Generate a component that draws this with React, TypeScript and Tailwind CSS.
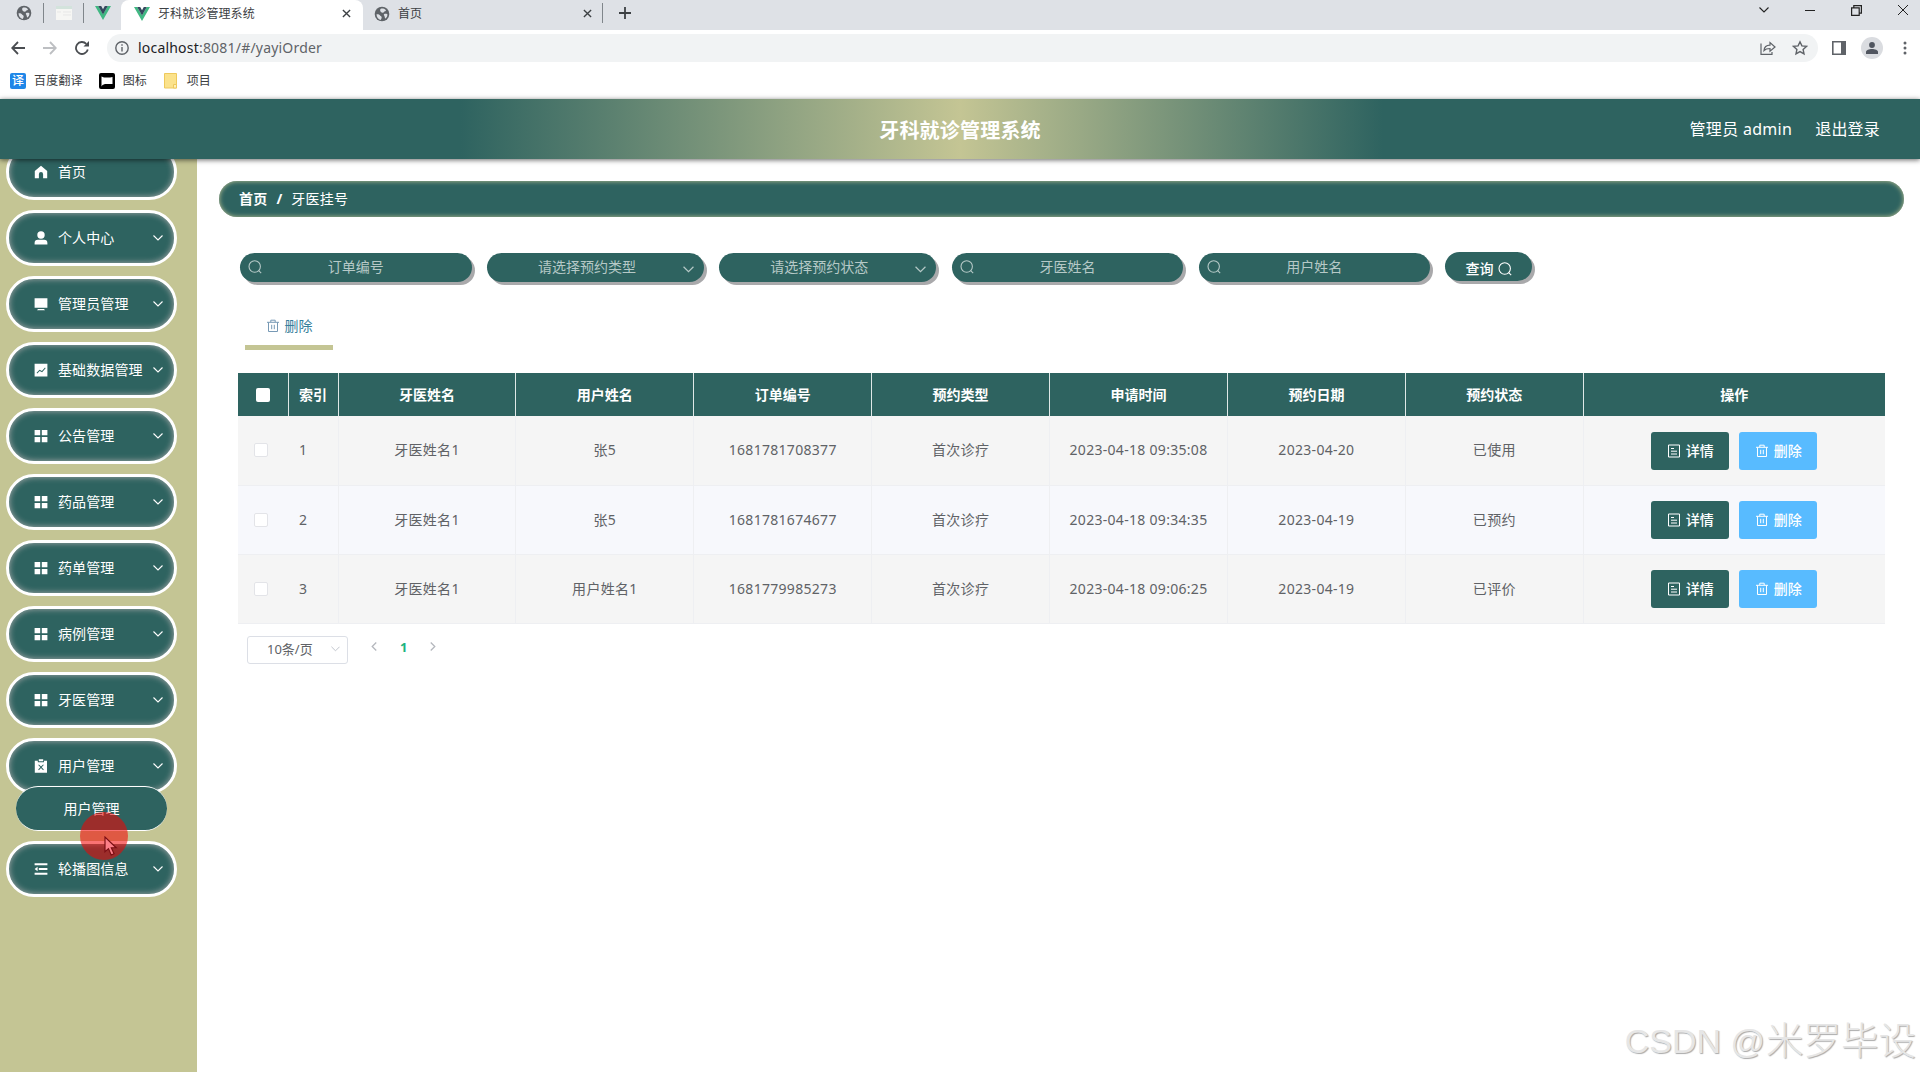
import type { ReactNode } from 'react';

type IconProps = { className?: string };

const GlobeIcon = ({ className = '' }: IconProps) => (
  <svg viewBox="0 0 16 16" className={className}>
    <circle cx="8" cy="8" r="7.3" fill="#5f6368" />
    <path d="M2.5 8.2c1.6-.2 3 .3 3.6 1.4.5 1 1.600.7 1.600 1.700 0 .9-.3 1.600-1 2.600C4.300 13.200 2.500 11 2.500 8.200zM6.800 2.700c1.700-.4 3.700.1 4.900 1.300.7.8-.3 1.400-1.200 1.400-.8.100-.6 1.200-1.500 1.300-1 .1-1.600-.400-2.300-1C6 5.100 5.900 3 6.800 2.700zM10 8.300c1-.7 2.200-.5 3.400-.1.100 1.800-.6 3.200-1.800 4.200-.9-.2-.700-1.200-1-2-.200-.600-1.200-1.400-.600-2.100z" fill="#dee1e6" />
  </svg>
);

const VueIcon = ({ className = '' }: IconProps) => (
  <svg viewBox="0 0 16 14" className={className}>
    <path d="M0 0h3.200L8 8.300 12.800 0H16L8 14z" fill="#41b883" />
    <path d="M3.200 0h3L8 3.200 9.800 0h3L8 8.400z" fill="#35495e" />
  </svg>
);

const CloseIcon = ({ className = '' }: IconProps) => (
  <svg viewBox="0 0 10 10" className={className} fill="none" stroke="currentColor" strokeWidth="1.5">
    <path d="M1 1l8 8M9 1L1 9" />
  </svg>
);

const ChevronDown = ({ className = '' }: IconProps) => (
  <svg viewBox="0 0 10 6" className={className} fill="none" stroke="currentColor" strokeWidth="1.100">
    <path d="M.5.5L5 5 9.500.5" />
  </svg>
);

const SearchIcon = ({ className = '' }: IconProps) => (
  <svg viewBox="0 0 14 14" className={className} fill="none" stroke="currentColor" strokeWidth="1.100">
    <circle cx="6.700" cy="6.500" r="5.700" />
    <path d="M10.700 10.600l2.500 2.500" />
  </svg>
);

const TrashIcon = ({ className = '' }: IconProps) => (
  <svg viewBox="0 0 14 14" className={className} fill="none" stroke="currentColor" strokeWidth="1">
    <path d="M1 3.300h12M2.500 3.300v9.200h9V3.300M4.800 3V1.200h4.400V3M5.700 5.800v4.400M8.300 5.800v4.400" />
  </svg>
);

const DocIcon = ({ className = '' }: IconProps) => (
  <svg viewBox="0 0 14 14" className={className} fill="none" stroke="currentColor" strokeWidth="1">
    <path d="M1.500 1h11v12h-11zM4 4.500h3M4 7.200h6M4 10h6" />
  </svg>
);

// Iconos rellenos del menú lateral
const menuIcons: Record<string, ReactNode> = {
  home: <path d="M7 .8L.8 6v7.300h4.100V9.200a2.100 2.100 0 014.200 0v4.100h4.100V6z" />,
  user: <path d="M7 .3a3.700 3.700 0 110 7.400A3.700 3.700 0 017 .3zM.600 13.600v-1.700c0-2 1.200-3.200 3.200-3.200h6.400c2 0 3.200 1.200 3.200 3.200v1.700z" />,
  monitor: <path d="M.6 1.200h12.800v9.600H.6zM4 12h6l1 1.300H3z" />,
  data: <path fillRule="evenodd" d="M.6.8h12.800v12.600H.6zM2.600 9.800l.6.600 2.500-2.500 2.400 1.300 3.500-4-.6-.600-3.100 3.500-2.300-1.300z" />,
  grid: <path d="M.6.9h5.600v5.300H.6zM7.800.9h5.600v5.300H7.800zM.6 7.900h5.600v5.300H.6zM7.800 7.900h5.600v5.300H7.800z" />,
  order: <path fillRule="evenodd" d="M.8 1.800h3v1.400h6.200V1.800h3v12H.8zM4.800.3h4.400v1.900H4.800zM4.200 6l2.100 2.300-2.100 2.300.7.600L7 8.900l2.100 2.300.7-.600-2.100-2.300L9.800 6l-.7-.6L7 7.600 4.900 5.400z" />,
  fold: <path d="M.6 1.300h12.800v1.900H.6zM4.800 6h8.600v1.900H4.800zM.6 10.800h12.800v1.900H.6zM.6 7l3-2.200v4.400z" />,
};

const menu = [
  { icon: 'home', label: '首页', leaf: true },
  { icon: 'user', label: '个人中心' },
  { icon: 'monitor', label: '管理员管理' },
  { icon: 'data', label: '基础数据管理' },
  { icon: 'grid', label: '公告管理' },
  { icon: 'grid', label: '药品管理' },
  { icon: 'grid', label: '药单管理' },
  { icon: 'grid', label: '病例管理' },
  { icon: 'grid', label: '牙医管理' },
  { icon: 'order', label: '用户管理', child: '用户管理' },
  { icon: 'fold', label: '轮播图信息' },
];

const columns = ['牙医姓名', '用户姓名', '订单编号', '预约类型', '申请时间', '预约日期', '预约状态'];

const orders = [
  ['牙医姓名1', '张5', '1681781708377', '首次诊疗', '2023-04-18 09:35:08', '2023-04-20', '已使用'],
  ['牙医姓名1', '张5', '1681781674677', '首次诊疗', '2023-04-18 09:34:35', '2023-04-19', '已预约'],
  ['牙医姓名1', '用户姓名1', '1681779985273', '首次诊疗', '2023-04-18 09:06:25', '2023-04-19', '已评价'],
];

function BrowserChrome() {
  return (
    <div className="h-[99px] shrink-0 bg-white text-xs text-[#3c4043]">
      <div className="flex h-[30px] bg-[#dee1e6]">
        <div className="flex w-[121px] items-center pb-1 pl-4">
          <GlobeIcon className="h-4 w-4" />
          <span className="ml-[11px] h-5 w-px bg-[#80868b]" />
          <svg viewBox="0 0 16 14" className="ml-3 h-3.5 w-4">
            <path d="M0 0h16v14H0z" fill="#f6f6f4" />
            <path d="M0 0h16v3H0z" fill="#d3e3dc" />
            <path d="M1 6h4M7 6h8M7 9h8" stroke="#e7e7e7" />
          </svg>
          <span className="ml-[11px] h-5 w-px bg-[#80868b]" />
          <VueIcon className="ml-[11px] h-3.5 w-4" />
        </div>
        <div className="flex w-[242px] items-center rounded-t-lg bg-white pr-3 pb-[3px] pl-[13px]">
          <VueIcon className="h-3.5 w-4" />
          <span className="ml-2 flex-1 pt-px tracking-[0.1px]">牙科就诊管理系统</span>
          <CloseIcon className="h-[9px] w-[9px]" />
        </div>
        <div className="flex w-[239px] items-center pr-[10px] pb-[3px] pl-[11px]">
          <GlobeIcon className="h-4 w-4" />
          <span className="ml-2 flex-1 pt-px">首页</span>
          <CloseIcon className="h-[9px] w-[9px]" />
        </div>
        <div className="flex flex-1 items-center pb-1">
          <span className="h-5 w-px bg-[#80868b]" />
          <svg viewBox="0 0 12 12" className="ml-[16px] h-3 w-3" stroke="#3c4043" strokeWidth="1.800">
            <path d="M6 0v12M0 6h12" />
          </svg>
        </div>
        <div className="flex items-center gap-9 pr-3 pb-[10px] text-[#222]">
          <ChevronDown className="h-[6px] w-[10px]" />
          <svg viewBox="0 0 10 10" className="h-[10px] w-[10px]" stroke="currentColor"><path d="M0 5.500h10" /></svg>
          <svg viewBox="0 0 11 11" className="h-[11px] w-[11px]" fill="none" stroke="currentColor" strokeWidth="1.200">
            <path d="M.6 2.800h7.600v7.600H.6zM2.800 2.600V.6h7.600v7.600H8.400" />
          </svg>
          <svg viewBox="0 0 10 10" className="h-[10px] w-[10px]" stroke="currentColor"><path d="M0 0l10 10M10 0L0 10" /></svg>
        </div>
      </div>

      <div className="flex h-[36px] items-center pr-3 pl-[11px] text-[#5f6368]">
        <svg viewBox="0 0 14 14" className="h-3.5 w-3.5" fill="none" stroke="#4a4d51" strokeWidth="1.800"><path d="M14 7H1.500M7 1L1.200 7 7 13" /></svg>
        <svg viewBox="0 0 14 14" className="ml-[18px] h-3.5 w-3.5" fill="none" stroke="#bdbfc2" strokeWidth="1.800"><path d="M0 7h12.500M7 1l5.800 6L7 13" /></svg>
        <svg viewBox="0 0 14 14" className="ml-[18px] h-3.5 w-3.5" fill="none" stroke="#4a4d51" strokeWidth="1.800">
          <path d="M12.800 8.500A6 6 0 1111.300 2.800" />
          <path d="M14 0v5.500H8.500z" fill="#4a4d51" stroke="none" />
        </svg>
        <div className="ml-[18px] flex h-7 w-[1711px] items-center rounded-full bg-[#f1f3f4] pr-[10px] pl-2">
          <svg viewBox="0 0 14 14" className="h-3.5 w-3.5" fill="none" stroke="currentColor" strokeWidth="1.400">
            <circle cx="7" cy="7" r="6.200" /><path d="M7 6v4.500M7 3.200v1.500" />
          </svg>
          <span className="ml-[9px] flex-1 text-[14px] tracking-[0.2px]"><span className="text-[#202124]">localhost</span>:8081/#/yayiOrder</span>
          <svg viewBox="0 0 16 14" className="mr-[16px] h-3.5 w-4" fill="none" stroke="currentColor" strokeWidth="1.200">
            <path d="M1 2.500v10.800h11V11M4 9.500c.3-3.500 2.300-5.200 6-5.300V1.500L15 6l-5 4.200V7.500C7.300 7.500 5.300 8 4 9.500z" />
          </svg>
          <svg viewBox="0 0 16 16" className="h-4 w-4" fill="none" stroke="currentColor" strokeWidth="1.400">
            <path d="M8 1.800l1.900 4.100 4.500.5-3.300 3 .9 4.500L8 11.600l-4 2.300.9-4.500-3.300-3 4.500-.5z" />
          </svg>
        </div>
        <svg viewBox="0 0 14 14" className="ml-[14px] h-3.5 w-3.5" fill="none" stroke="currentColor" strokeWidth="1.600">
          <path d="M.8.8h12.400v12.400H.8z" /><path d="M9 1h4v12H9z" fill="currentColor" stroke="none" />
        </svg>
        <span className="ml-[15px] flex h-[22px] w-[22px] items-center justify-center rounded-full bg-[#dadce0]">
          <svg viewBox="0 0 12 12" className="h-3 w-3" fill="#50555f"><circle cx="6" cy="3" r="2.900" /><path d="M0 12v-2c0-2 3-3 6-3s6 1 6 3v2z" /></svg>
        </span>
        <svg viewBox="0 0 4 14" className="ml-[20px] h-3.5 w-1" fill="currentColor">
          <circle cx="2" cy="2" r="1.500" /><circle cx="2" cy="7" r="1.500" /><circle cx="2" cy="12" r="1.500" />
        </svg>
      </div>

      <div className="flex h-[29px] items-center pl-2.5">
        <span className="flex h-4 w-4 items-center justify-center rounded-xs bg-[#1f87e8] text-[12px] leading-none font-medium text-white">译</span>
        <span className="ml-2 tracking-[0.2px]">百度翻译</span>
        <svg viewBox="0 0 16 16" className="ml-4 h-4 w-4">
          <rect width="16" height="16" rx="2" />
          <path d="M2.500 13.500V3.500L5 4.500h6l2.500-.5v7H6L3.500 12z" fill="#fff" />
        </svg>
        <span className="ml-2">图标</span>
        <svg viewBox="0 0 13 16" className="ml-[17px] h-4 w-[13px]">
          <path d="M.5.500h12v14.500H.5z" fill="#fbe28b" stroke="#eec95c" />
          <path d="M9.500 11.500h3v3.500h-3z" fill="#fff0b8" stroke="#eec95c" />
        </svg>
        <span className="ml-[10px]">项目</span>
      </div>
    </div>
  );
}

function Sidebar() {
  return (
    <aside className="w-[197px] shrink-0 overflow-hidden bg-[#c4c594] pl-1.5">
      <ul className="-mt-[15px] w-[171px] text-sm text-white">
        {menu.map((item) => (
          <li key={item.label} className="mb-2.5">
            <div className="flex h-14 items-center rounded-[30px] border-[3px] border-white bg-[#2e6360] pr-[11px] pl-[25px] shadow-[inset_0_0_6px_0_#aaa]">
              <svg viewBox="0 0 14 14" className="mr-[10px] h-3.5 w-3.5 shrink-0" fill="#fff">{menuIcons[item.icon]}</svg>
              <span className="flex-1 tracking-[0.1px] whitespace-nowrap">{item.label}</span>
              {!item.leaf && <ChevronDown className="h-[6px] w-[10px] shrink-0" />}
            </div>
            {item.child && (
              <div className="relative mx-auto -mt-2 flex h-[45px] w-[151px] items-center justify-center rounded-[22px] border-y border-white bg-[#2e6360]">
                {item.child}
                {/* marca del puntero */}
                <span className="absolute top-[25px] left-[64px] h-12 w-12 rounded-full bg-[#f50000]/55" />
                <svg viewBox="0 0 13 19" className="absolute top-[49px] left-[88px] h-[20px] w-[14px]">
                  <path d="M.8 1v14l3.300-3 2.600 6 2.700-1.200-2.600-5.600h4.600z" fill="#fc7f88" stroke="#7a0d12" strokeWidth="1.100" />
                </svg>
              </div>
            )}
          </li>
        ))}
      </ul>
    </aside>
  );
}

const FilterInput = ({ label }: { label: string }) => (
  <div className="flex h-[29px] w-[231.500px] items-center rounded-full bg-[#2e6360] px-2 pb-px text-[#b6c9c7] shadow-[3px_3px_0_#a9a9ab]">
    <SearchIcon className="h-3.5 w-3.5" />
    <span className="flex-1 pr-3.5 text-center">{label}</span>
  </div>
);

const FilterSelect = ({ label }: { label: string }) => (
  <div className="flex h-[29px] w-[217px] items-center rounded-full bg-[#2e6360] pr-[10px] pb-px pl-1 text-[#b6c9c7] shadow-[3px_3px_0_#a9a9ab]">
    <span className="flex-1 text-center">{label}</span>
    <ChevronDown className="mt-1 h-[7px] w-[11px]" />
  </div>
);

function OrderTable() {
  return (
    <table className="w-[1647px] table-fixed border-collapse text-sm">
      <colgroup>
        <col className="w-[50px]" />
        <col className="w-[50px]" />
        {columns.map((c) => <col key={c} className="w-[177.900px]" />)}
        <col />
      </colgroup>
      <thead>
        <tr className="h-[43px] bg-[#2e6360] font-bold text-white">
          <th className="border-r border-[#dfe8e7]"><span className="mx-auto block h-3.5 w-3.5 rounded-xs bg-white" /></th>
          <th className="border-r border-[#dfe8e7]">索引</th>
          {columns.map((c) => <th key={c} className="border-r border-[#dfe8e7]">{c}</th>)}
          <th>操作</th>
        </tr>
      </thead>
      <tbody className="text-[#606266]">
        {orders.map((row, i) => (
          <tr key={row[2]} className="h-[69px] border-b border-[#eeeff2] bg-[#f5f5f5] even:bg-[#f7f8fc]">
            <td><span className="ml-4 block h-3.5 w-3.5 rounded-xs border border-[#e3e4e8] bg-white" /></td>
            <td className="border-r border-[#eeeff2] pl-[11px]">{i + 1}</td>
            {row.map((cell, j) => (
              <td key={j} className="border-r border-[#eeeff2] text-center tracking-[0.3px] whitespace-nowrap">{cell}</td>
            ))}
            <td>
              <div className="flex justify-center gap-2.5 pt-px font-medium text-white">
                <button className="flex h-[38px] w-[78px] items-center justify-center gap-[5px] rounded-[3px] bg-[#2e6360]">
                  <DocIcon className="h-3.5 w-3.5" />详情
                </button>
                <button className="flex h-[38px] w-[78px] items-center justify-center gap-[5px] rounded-[3px] bg-[#58bbff]">
                  <TrashIcon className="h-3.5 w-3.5" />删除
                </button>
              </div>
            </td>
          </tr>
        ))}
      </tbody>
    </table>
  );
}

export default function App() {
  return (
    <div className="relative flex h-[1072px] w-[1920px] flex-col overflow-hidden bg-white font-['Noto_Sans','Noto_Sans_CJK_SC',sans-serif]">
      <BrowserChrome />

      <header className="relative z-10 flex h-[60px] shrink-0 items-center bg-[linear-gradient(90deg,#2e6360_24%,#c4c594_50%,#2e6360_72%)] px-10 text-base text-white shadow-[0_1px_5px_rgba(0,0,0,0.6)]">
        <div className="flex-1" />
        <h1 className="pt-[3px] text-xl font-bold tracking-[0.2px]">牙科就诊管理系统</h1>
        <div className="flex flex-1 justify-end gap-[23px]">
          <span className="tracking-[0.3px]">管理员 admin</span>
          <span className="tracking-[0.2px]">退出登录</span>
        </div>
      </header>

      <div className="flex min-h-0 flex-1">
        <Sidebar />
        <main className="flex-1 pt-[22px] pr-4 pl-[22px] text-sm">
          <div className="flex h-9 items-center gap-[9px] rounded-full bg-[#2e6360] pl-5 text-white shadow-[inset_0_0_5px_0_#c4c594]">
            <span className="font-bold tracking-[0.2px]">首页</span>
            <span className="font-bold">/</span>
            <span className="tracking-[0.3px]">牙医挂号</span>
          </div>

          <div className="mt-9 flex gap-[15.400px] pl-[21px]">
            <FilterInput label="订单编号" />
            <FilterSelect label="请选择预约类型" />
            <FilterSelect label="请选择预约状态" />
            <FilterInput label="牙医姓名" />
            <FilterInput label="用户姓名" />
            <button className="-mt-px flex h-[29px] w-[87px] items-center justify-center gap-[5px] rounded-full bg-[#2e6360] pt-1 font-medium text-white shadow-[3px_3px_0_#a9a9ab]">
              查询<SearchIcon className="h-3.5 w-3.5" />
            </button>
          </div>

          <div className="mt-[22px] ml-[26px] flex h-[46px] w-[88px] items-center justify-center gap-[5px] border-b-[5px] border-[#c4c594] pt-[3px] text-[#37809b]">
            <TrashIcon className="h-3.5 w-3.5 text-[#7799b5]" />删除
          </div>

          <div className="mt-[23px] ml-[19px]">
            <OrderTable />
            <div className="mt-3 ml-[9px] flex items-center text-[#606266]">
              <div className="flex h-7 w-[101px] items-center rounded-[3px] border border-[#dcdfe6] pr-[7px] pb-px pl-[19px] text-[13px]">
                <span className="flex-1">10条/页</span>
                <ChevronDown className="h-[6px] w-[9px] text-[#c0c4cc]" />
              </div>
              <svg viewBox="0 0 6 10" className="mb-1.5 ml-[23px] h-[9px] w-[6px]" fill="none" stroke="#b4b7bd" strokeWidth="1.400"><path d="M5.500.500L1 5l4.500 4.500" /></svg>
              <span className="mb-1 ml-[23px] text-[13px] font-bold text-[#1cb37f]">1</span>
              <svg viewBox="0 0 6 10" className="mb-1.5 ml-[23px] h-[9px] w-[6px]" fill="none" stroke="#b4b7bd" strokeWidth="1.400"><path d="M.5.500L5 5 .5 9.500" /></svg>
            </div>
          </div>
        </main>
      </div>

      <div className="absolute right-1 bottom-1 flex font-['Liberation_Sans','Noto_Sans_CJK_SC',sans-serif] text-[37.500px] leading-[54px] font-light whitespace-nowrap text-[#e6e6e6] [text-shadow:1px_1px_1px_#aaa]">
        <span className="pr-px text-[34px]">CSDN @</span>
        <span>米罗毕设</span>
      </div>
    </div>
  );
}
